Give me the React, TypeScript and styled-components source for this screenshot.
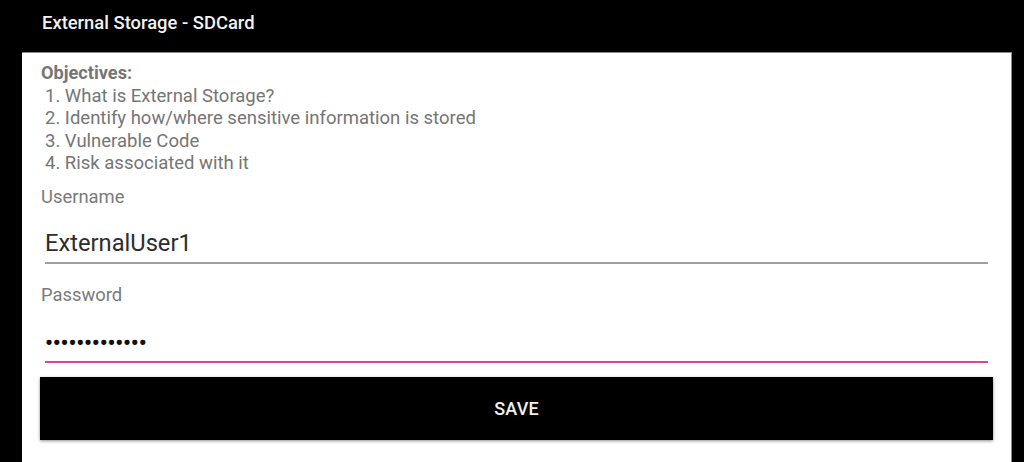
import React from "react";
import styled, { createGlobalStyle } from "styled-components";

const Global = createGlobalStyle`
  html, body { margin: 0; padding: 0; background: #000; }
  body { font-family: Roboto, "Noto Sans", sans-serif; }
`;

const Screen = styled.div`
  width: 1024px;
  height: 462px;
  background: #000;
  display: flex;
  flex-direction: column;
  overflow: hidden;
`;

const TitleBar = styled.div`
  height: 52px;
  flex: none;
  display: flex;
  align-items: center;
  padding: 0 0 8px 42px;
  box-sizing: border-box;
  color: #f2f2f2;
  font-size: 18.4px;
  font-weight: 500;
`;

const Panel = styled.div`
  margin: 0 12px 0 22px;
  flex: 1;
  background: #fff;
  border-top: 1px solid #888;
  border-right: 1px solid #888;
  padding: 9px 19px 0 19px;
  display: flex;
  flex-direction: column;
`;

const Objectives = styled.div`
  color: #757575;
  font-size: 18.5px;
  line-height: 22.5px;
`;

const ObjTitle = styled.div`
  font-weight: 700;
  font-size: 18.2px;
`;

const ObjItem = styled.div`
  padding-left: 4px;
`;

const Label = styled.div<{ $top: number }>`
  color: #7a7a7a;
  font-size: 18.4px;
  margin-top: ${(p) => p.$top}px;
  line-height: 22px;
`;

const Field = styled.div<{ $focus?: boolean; $top: number }>`
  margin: ${(p) => p.$top}px 4px 0 4px;
  padding: 0 0 ${(p) => (p.$focus ? 4 : 5)}px 0;
  border-bottom: 2px solid ${(p) => (p.$focus ? "#d9478a" : "#9e9e9e")};
  font-size: 23.7px;
  line-height: 28px;
  color: #2d2d2d;
`;

const Dots = styled.span`
  font-size: 22px;
  letter-spacing: -0.1px;
  color: #111;
  font-weight: 700;
`;

const SaveButton = styled.button`
  margin: 14px 0 0 -1px;
  width: 953px;
  height: 63px;
  background: #000;
  color: #f0f0f0;
  border: none;
  box-shadow: 0 1px 3px rgba(0,0,0,0.45);
  font-family: Roboto, "Noto Sans", sans-serif;
  font-size: 18px;
  font-weight: 500;
  letter-spacing: 0.2px;
`;

export default function App() {
  return (
    <>
      <Global />
      <Screen>
        <TitleBar>External Storage - SDCard</TitleBar>
        <Panel>
          <Objectives>
            <ObjTitle>Objectives:</ObjTitle>
            <ObjItem>1. What is External Storage?</ObjItem>
            <ObjItem>2. Identify how/where sensitive information is stored</ObjItem>
            <ObjItem>3. Vulnerable Code</ObjItem>
            <ObjItem>4. Risk associated with it</ObjItem>
          </Objectives>
          <Label $top={11}>Username</Label>
          <Field $top={21}>ExternalUser1</Field>
          <Label $top={20}>Password</Label>
          <Field $top={22} $focus>
            <Dots>•••••••••••••</Dots>
          </Field>
          <SaveButton>SAVE</SaveButton>
        </Panel>
      </Screen>
    </>
  );
}
